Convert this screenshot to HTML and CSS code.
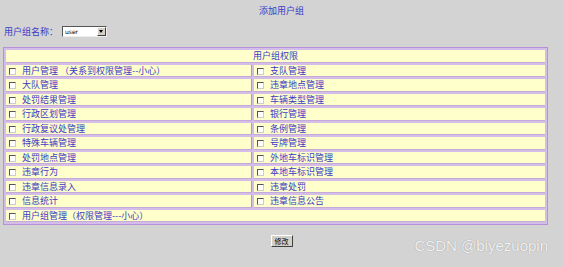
FILE: index.html
```html
<!DOCTYPE html>
<html>
<head>
    <title>添加用户组</title>
    <link rel="stylesheet" href="styles.css">
</head>
<body>
    <div class="title">添加用户组</div>

    <form class="group-form">
        <div class="name-row">
            <span class="label">用户组名称：</span>
            <span class="select">
                <span class="select-value">user</span>
                <span class="select-arrow"></span>
            </span>
        </div>

        <table class="rights">
            <tr><td colspan="2" class="head">用户组权限</td></tr>
            <tr><td class="left"><span class="box"></span>用户管理 （关系到权限管理--小心）</td><td><span class="box"></span>支队管理</td></tr>
            <tr><td class="left"><span class="box"></span>大队管理</td><td><span class="box"></span>违章地点管理</td></tr>
            <tr><td class="left"><span class="box"></span>处罚结果管理</td><td><span class="box"></span>车辆类型管理</td></tr>
            <tr><td class="left"><span class="box"></span>行政区划管理</td><td><span class="box"></span>银行管理</td></tr>
            <tr><td class="left"><span class="box"></span>行政复议处管理</td><td><span class="box"></span>条例管理</td></tr>
            <tr><td class="left"><span class="box"></span>特殊车辆管理</td><td><span class="box"></span>号牌管理</td></tr>
            <tr><td class="left"><span class="box"></span>处罚地点管理</td><td><span class="box"></span>外地车标识管理</td></tr>
            <tr><td class="left"><span class="box"></span>违章行为</td><td><span class="box"></span>本地车标识管理</td></tr>
            <tr><td class="left"><span class="box"></span>违章信息录入</td><td><span class="box"></span>违章处罚</td></tr>
            <tr><td class="left"><span class="box"></span>信息统计</td><td><span class="box"></span>违章信息公告</td></tr>
            <tr><td colspan="2"><span class="box"></span>用户组管理（权限管理---小心）</td></tr>
        </table>

        <div class="actions">
            <button type="button" class="btn">修改</button>
        </div>
    </form>

    <div class="watermark">CSDN @biyezuopin</div>
</body>
</html>
```

FILE: styles.css
```css
body {
    font-family: "Noto Sans CJK SC", "DejaVu Sans", sans-serif;
    font-size: 9px;
    background-color: #d3d3d3;
    color: #3a3ac8;
    margin: 0;
    padding: 0 3px;
    position: relative;
    height: 267px;
}

.title {
    text-align: center;
    padding-top: 5px;
    line-height: 12px;
    height: 20px;
}

.name-row {
    display: flex;
    align-items: center;
    height: 13px;
    padding-left: 1px;
    margin-bottom: 9px;
}

.label {
    width: 58px;
}

.select {
    display: flex;
    align-items: center;
    width: 45px;
    height: 11px;
    box-sizing: border-box;
    background-color: #fff;
    border: 1px solid #555;
    border-right-color: #eee;
    border-bottom-color: #eee;
}

.select-value {
    flex: 1;
    font-family: "DejaVu Sans", sans-serif;
    font-size: 6px;
    color: #000;
    padding-left: 2px;
}

.select-arrow {
    width: 9px;
    height: 9px;
    box-sizing: border-box;
    background-color: #d4d0c8;
    border: 1px solid #fff;
    border-right-color: #404040;
    border-bottom-color: #404040;
    position: relative;
}

.select-arrow::after {
    content: "";
    position: absolute;
    left: 1px;
    top: 2px;
    border-left: 2.5px solid transparent;
    border-right: 2.5px solid transparent;
    border-top: 3px solid #000;
}

.rights {
    width: 545px;
    border-collapse: separate;
    border-spacing: 2px;
    background-color: #d4bde8;
    border: 1px solid #b592d6;
}

.rights tr {
    height: 12.5px;
}

.rights td {
    background-color: #ffffcc;
    height: 12.5px;
    padding: 0 0 0 3px;
    line-height: 11px;
    border-bottom: 1px solid #c4aad8;
    box-sizing: border-box;
    white-space: nowrap;
}

.rights td.left {
    width: 246px;
    border-right: 1px solid #b592d6;
}

.rights td.head {
    text-align: center;
    padding: 0;
}

.box {
    display: inline-block;
    width: 7px;
    height: 7px;
    box-sizing: border-box;
    background-color: #fff;
    border: 1px solid #555;
    border-right-color: #ccc;
    border-bottom-color: #ccc;
    margin: 0 6px 0 0;
    vertical-align: -1px;
}

.actions {
    text-align: center;
    padding-top: 9px;
}

.btn {
    font-family: "Noto Sans CJK SC", sans-serif;
    font-size: 7px;
    line-height: 8px;
    color: #000;
    background-color: #d4d0c8;
    border: 1px solid #fff;
    border-right-color: #404040;
    border-bottom-color: #404040;
    padding: 1px 3px;
}

.watermark {
    position: absolute;
    right: 15px;
    top: 237px;
    font-family: "Liberation Sans", sans-serif;
    font-size: 15px;
    color: #f2f2f2;
    text-shadow: 0 0 1px #888;
}
```
